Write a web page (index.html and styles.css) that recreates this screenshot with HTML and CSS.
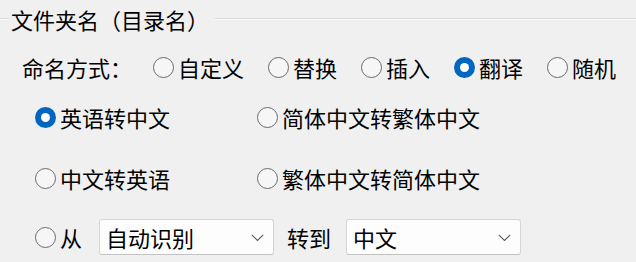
FILE: index.html
```html
<!DOCTYPE html>
<html lang="zh-CN">
<head>
<meta charset="utf-8">
<title>文件夹名</title>
<link rel="stylesheet" href="styles.css">
</head>
<body>
<div class="group">
  <div class="group-title">
    <span class="line line-left"></span>
    <span class="title-text">文件夹名（目录名）</span>
    <span class="line line-fill"></span>
  </div>

  <div class="row row-mode">
    <span class="label">命名方式：</span>
    <div class="options">
      <label class="radio"><span class="dot"></span><span>自定义</span></label>
      <label class="radio"><span class="dot"></span><span>替换</span></label>
      <label class="radio"><span class="dot"></span><span>插入</span></label>
      <label class="radio"><span class="dot checked"></span><span>翻译</span></label>
      <label class="radio"><span class="dot"></span><span>随机</span></label>
    </div>
  </div>

  <div class="grid">
    <label class="radio"><span class="dot checked"></span><span>英语转中文</span></label>
    <label class="radio"><span class="dot"></span><span>简体中文转繁体中文</span></label>
  </div>

  <div class="grid grid-2">
    <label class="radio"><span class="dot"></span><span>中文转英语</span></label>
    <label class="radio"><span class="dot"></span><span>繁体中文转简体中文</span></label>
  </div>

  <div class="row row-from">
    <label class="radio"><span class="dot"></span><span>从</span></label>
    <div class="select select-from">
      <span>自动识别</span>
      <svg class="chev" width="13" height="8" viewBox="0 0 13 8"><polyline points="0.8,0.8 6.5,6.5 12.2,0.8" fill="none" stroke="#5c5c5c" stroke-width="1.1"/></svg>
    </div>
    <span class="to-label">转到</span>
    <div class="select">
      <span>中文</span>
      <svg class="chev" width="13" height="8" viewBox="0 0 13 8"><polyline points="0.8,0.8 6.5,6.5 12.2,0.8" fill="none" stroke="#5c5c5c" stroke-width="1.1"/></svg>
    </div>
  </div>
</div>
</body>
</html>
```

FILE: styles.css
```css
html, body {
  margin: 0;
  padding: 0;
  background: #f0f0f0;
}

body {
  width: 636px;
  height: 262px;
  overflow: hidden;
  font-family: "Noto Sans CJK SC", "Microsoft YaHei", sans-serif;
  font-size: 22px;
  color: #000;
}

.group {
  display: flex;
  flex-direction: column;
}

.group-title {
  display: flex;
  align-items: center;
  height: 38px;
}

.line {
  height: 1px;
  background: #d9d9d9;
  border-bottom: 1px solid #fbfbfb;
}

.line-left {
  width: 9px;
  margin-right: 2px;
}

.line-fill {
  flex: 1;
  margin-left: 6px;
}

.title-text {
  line-height: 30px;
  white-space: nowrap;
}

.row {
  display: flex;
  align-items: center;
  height: 30px;
  line-height: 30px;
}

.row-mode {
  margin-top: 14px;
  padding-left: 22px;
}

.label {
  width: 131px;
  white-space: nowrap;
}

.options {
  display: flex;
  align-items: center;
  gap: 24px;
}

.radio {
  display: flex;
  align-items: center;
  gap: 4px;
  white-space: nowrap;
  line-height: 30px;
}

.dot {
  box-sizing: border-box;
  width: 21px;
  height: 21px;
  border-radius: 50%;
  border: 1.5px solid #6a6a6a;
  background: #f6f6f6;
  flex: none;
}

.dot.checked {
  border: none;
  background: #0067c0;
  position: relative;
}

.dot.checked::after {
  content: "";
  position: absolute;
  left: 6px;
  top: 6px;
  width: 9px;
  height: 9px;
  border-radius: 50%;
  background: #fff;
}

.grid {
  display: grid;
  grid-template-columns: 222px auto;
  height: 30px;
  margin-top: 20px;
  padding-left: 35px;
  align-items: center;
}

.grid-2 {
  margin-top: 31px;
}

.row-from {
  margin-top: 26px;
  height: 36px;
  padding-left: 35px;
}

.select {
  box-sizing: border-box;
  width: 175px;
  height: 36px;
  background: #fdfdfd;
  border: 1px solid #d6d6d6;
  border-bottom-color: #c2c2c2;
  border-radius: 3px;
  display: flex;
  align-items: center;
  justify-content: space-between;
  padding: 0 9px 0 6px;
  line-height: 30px;
}

.select-from {
  margin-left: 17px;
}

.chev {
  display: block;
  margin-top: 2px;
}

.to-label {
  margin: 0 15px 0 13px;
  white-space: nowrap;
}
```
